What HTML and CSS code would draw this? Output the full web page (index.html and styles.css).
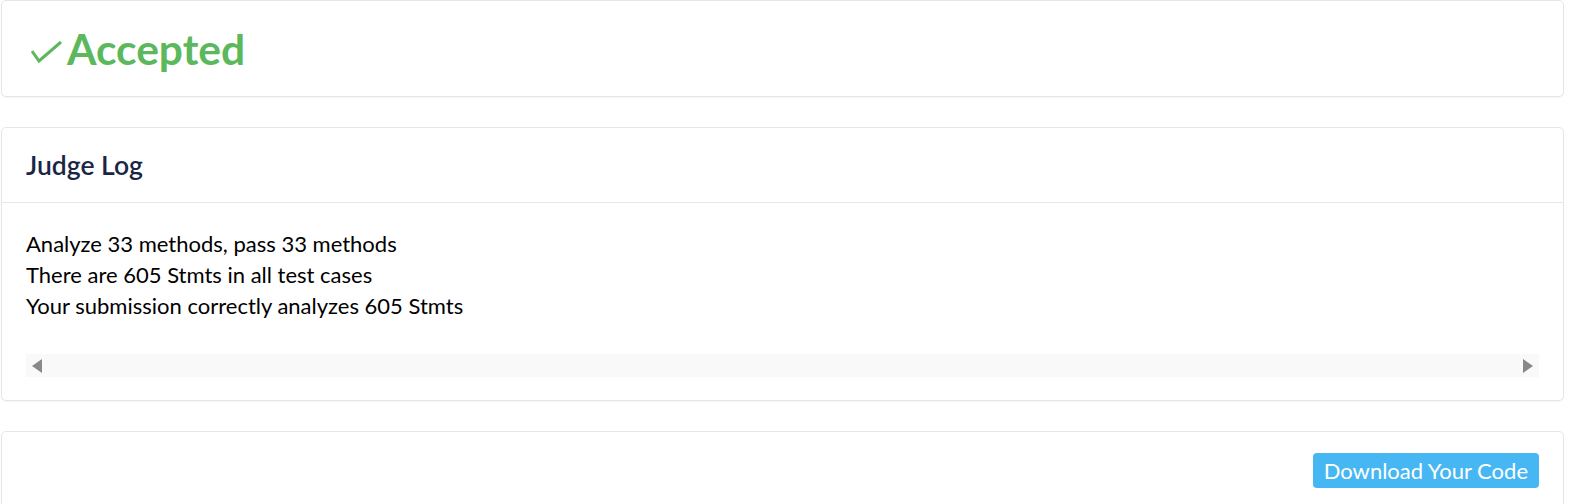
FILE: index.html
```html
<!DOCTYPE html>
<html lang="en">
<head>
    <meta charset="UTF-8">
    <meta name="viewport" content="width=device-width, initial-scale=1.0">
    <title>Submission Result</title>
    <link rel="stylesheet" href="styles.css">
</head>
<body>
    <main class="page">
        <section class="card status-card">
            <h1 class="status accepted">
                <svg class="status-icon" width="32" height="24" viewBox="0 0 32 24">
                    <path d="M1 11 L8 21 L30 2" fill="none" stroke="currentColor" stroke-width="3"/>
                </svg>
                Accepted
            </h1>
        </section>

        <section class="card">
            <div class="card-header">
                <h2>Judge Log</h2>
            </div>
            <div class="card-body">
                <pre class="judge-log">Analyze 33 methods, pass 33 methods
There are 605 Stmts in all test cases
Your submission correctly analyzes 605 Stmts</pre>
                <!-- horizontal scrollbar of the log box -->
                <div class="log-scroll">
                    <span class="arrow arrow-left"></span>
                    <span class="arrow arrow-right"></span>
                </div>
            </div>
        </section>

        <section class="card">
            <div class="card-body actions">
                <button class="download-btn">Download Your Code</button>
            </div>
        </section>
    </main>
</body>
</html>
```

FILE: styles.css
```css
body {
    font-family: Lato, "Noto Sans", sans-serif;
    margin: 0;
    padding: 0;
    background-color: #fff;
    color: #000;
}

.page {
    padding: 0 15px 0 1px;
}

.card {
    border: 1px solid #e6e6e6;
    border-radius: 5px;
    background-color: #fff;
    box-shadow: 0 1px 1px rgba(0, 0, 0, 0.04);
    margin-bottom: 30px;
}

.status-card {
    height: 95px;
    display: flex;
    align-items: center;
    padding: 0 29px;
}

.status {
    margin: 0;
    display: flex;
    align-items: center;
    gap: 4px;
    font-size: 42.5px;
    font-weight: 700;
}

.accepted {
    color: #5cb85c;
}

.status-icon {
    margin-top: 6px;
}

.card-header {
    height: 74px;
    display: flex;
    align-items: center;
    padding: 0 24px;
    border-bottom: 1px solid #e6e6e6;
}

.card-header h2 {
    margin: 0;
    font-size: 26.5px;
    font-weight: 600;
    color: #1a2744;
}

.card-body {
    padding: 25px 24px 23px;
}

.judge-log {
    font-family: inherit;
    font-size: 22px;
    line-height: 31px;
    margin: 0 0 33px;
}

.log-scroll {
    height: 23px;
    background-color: #f9f9f9;
    position: relative;
}

.arrow {
    position: absolute;
    top: 5px;
    width: 0;
    height: 0;
    border-top: 7px solid transparent;
    border-bottom: 7px solid transparent;
}

.arrow-left {
    left: 6px;
    border-right: 10px solid #888;
}

.arrow-right {
    right: 6px;
    border-left: 10px solid #888;
}

.actions {
    display: flex;
    justify-content: flex-end;
    padding-top: 21px;
}

.download-btn {
    font-family: inherit;
    font-size: 22px;
    color: #fff;
    background-color: #47b7f3;
    border: none;
    border-radius: 4px;
    height: 35px;
    padding: 0 11px;
    cursor: pointer;
}
```
